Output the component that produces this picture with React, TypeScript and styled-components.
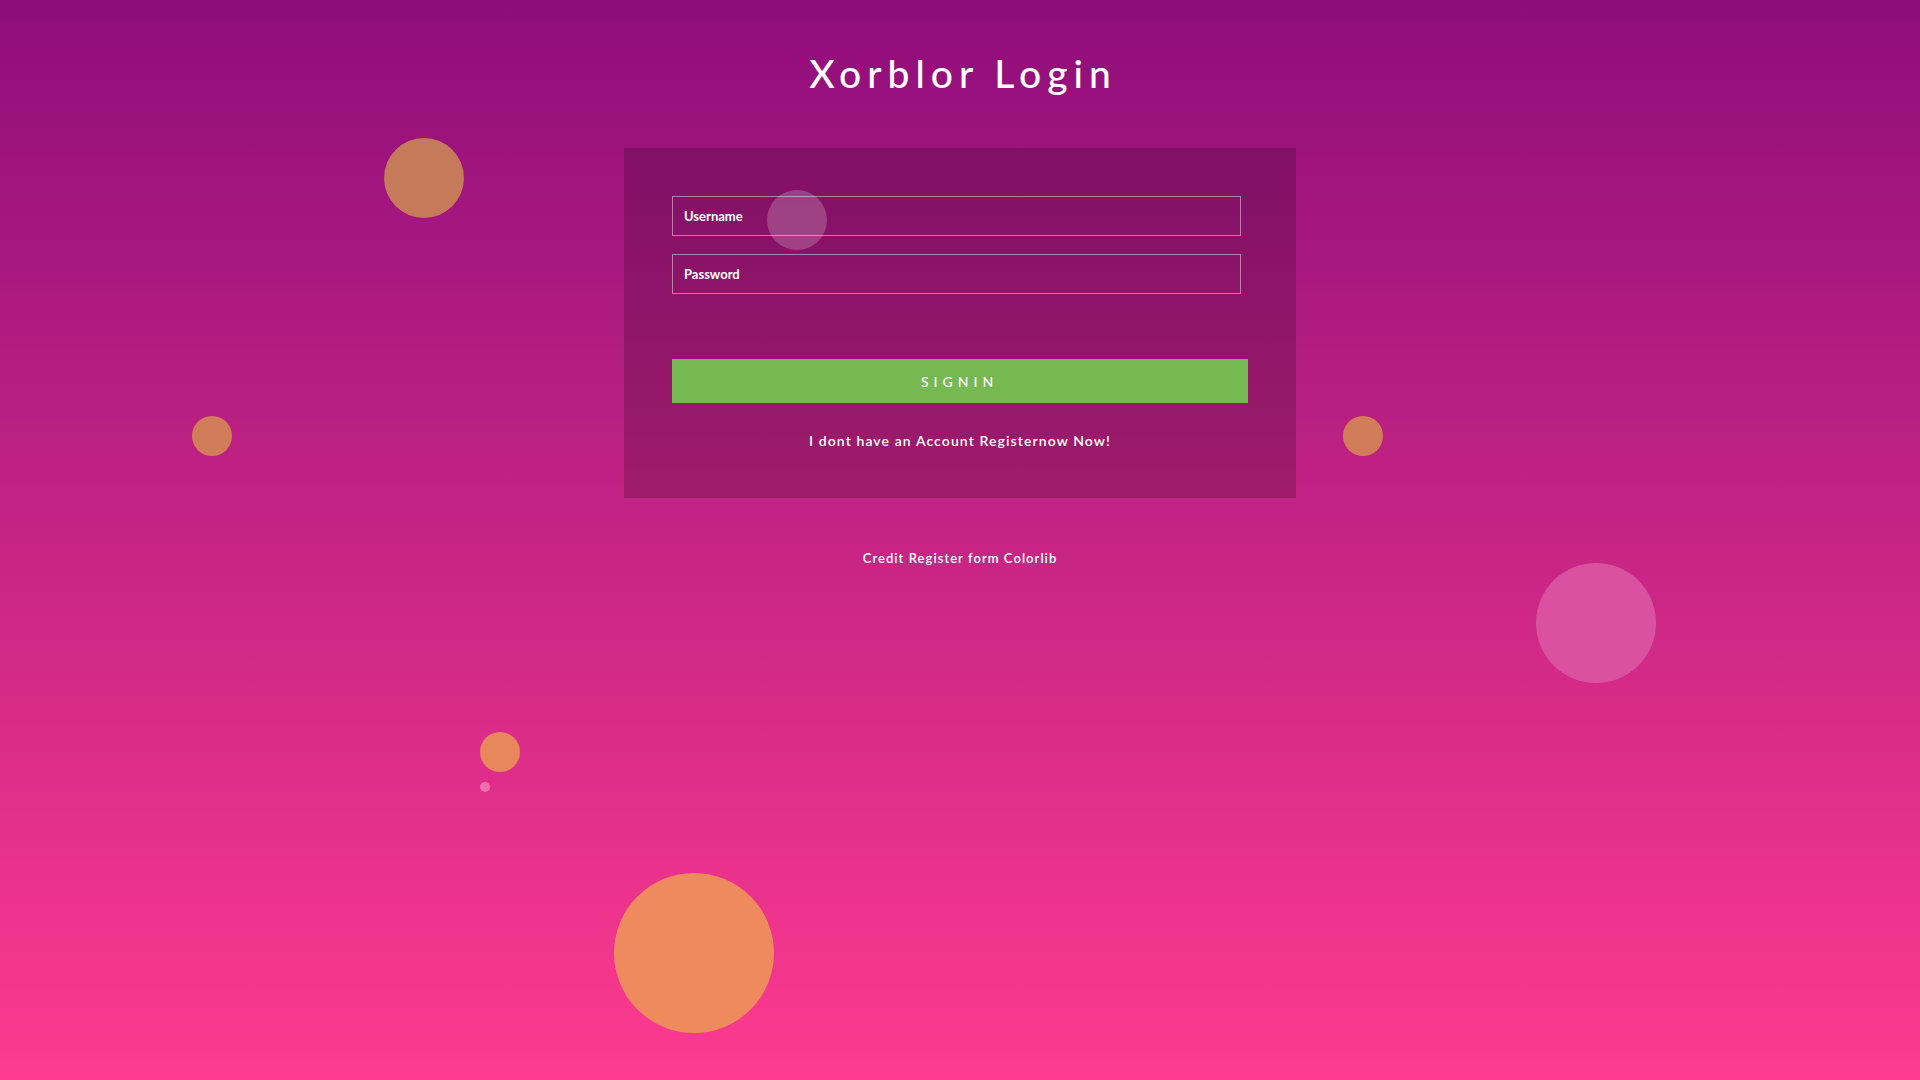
import React from "react";
import styled, { createGlobalStyle } from "styled-components";

const Global = createGlobalStyle`
  html, body { margin: 0; padding: 0; }
  body { font-family: Lato, "Noto Sans", sans-serif; }
  * { box-sizing: border-box; }
`;

const Page = styled.div`
  position: relative;
  min-height: 1080px;
  overflow: hidden;
  background: linear-gradient(to bottom, #8e0d7a 0%, #fe3b8f 100%);
  display: flex;
  flex-direction: column;
  align-items: center;
  color: #fff;
`;

const Title = styled.h1`
  margin: 50px 0 0;
  font-size: 39px;
  line-height: 46px;
  font-weight: 500;
  letter-spacing: 6px;
  padding-left: 6px;
  color: #fff;
`;

const Card = styled.form`
  position: relative;
  z-index: 1;
  margin-top: 52px;
  width: 672px;
  height: 350px;
  padding: 48px 48px 0;
  background: rgba(0, 0, 0, 0.18);
  display: flex;
  flex-direction: column;
`;

const Field = styled.input`
  width: calc(100% - 7px);
  height: 40px;
  padding: 0 11px;
  border: 1px solid rgba(255, 255, 255, 0.45);
  background: transparent;
  color: #fff;
  font-family: Lato, sans-serif;
  font-size: 13px;
  font-weight: 700;
  outline: none;
  & + & { margin-top: 18px; }
  &::placeholder { color: #fff; opacity: 1; }
`;

const Button = styled.button`
  margin-top: 65px;
  width: 100%;
  height: 44px;
  border: none;
  background: #76b852;
  color: #fff;
  font-family: Lato, sans-serif;
  font-size: 14px;
  font-weight: 500;
  letter-spacing: 5px;
  padding-left: 5px;
  cursor: pointer;
`;

const Note = styled.p`
  margin: 29px 0 0;
  text-align: center;
  font-size: 14px;
  line-height: 18px;
  font-weight: 600;
  letter-spacing: 1.1px;
  color: #fff;
`;

const Credit = styled.p`
  margin: 52px 0 0;
  font-size: 13px;
  line-height: 16px;
  font-weight: 600;
  letter-spacing: 1.05px;
  color: #fff;
`;

const Bubble = styled.span<{ $x: number; $y: number; $d: number; $c: string; $z?: number }>`
  position: absolute;
  left: ${(p) => p.$x - p.$d / 2}px;
  top: ${(p) => p.$y - p.$d / 2}px;
  width: ${(p) => p.$d}px;
  height: ${(p) => p.$d}px;
  border-radius: 50%;
  background: ${(p) => p.$c};
  z-index: ${(p) => p.$z ?? 0};
  pointer-events: none;
`;

const bubbles = [
  { x: 424, y: 178, d: 80, c: "#c57a5a" },
  { x: 212, y: 436, d: 40, c: "#d17d5a" },
  { x: 1363, y: 436, d: 40, c: "#d17d5a" },
  { x: 1596, y: 623, d: 120, c: "#d9519f" },
  { x: 500, y: 752, d: 40, c: "#e8875b" },
  { x: 485, y: 787, d: 10, c: "#ef6eb2" },
  { x: 694, y: 953, d: 160, c: "#ef8a5e" },
  { x: 797, y: 220, d: 60, c: "rgba(255,255,255,0.2)", z: 2 },
];

export default function App() {
  return (
    <Page>
      <Global />
      {bubbles.map((b, i) => (
        <Bubble key={i} $x={b.x} $y={b.y} $d={b.d} $c={b.c} $z={b.z} />
      ))}
      <Title>Xorblor Login</Title>
      <Card onSubmit={(e) => e.preventDefault()}>
        <Field type="text" placeholder="Username" />
        <Field type="password" placeholder="Password" />
        <Button type="submit">SIGNIN</Button>
        <Note>I dont have an Account Registernow Now!</Note>
      </Card>
      <Credit>Credit Register form Colorlib</Credit>
    </Page>
  );
}
